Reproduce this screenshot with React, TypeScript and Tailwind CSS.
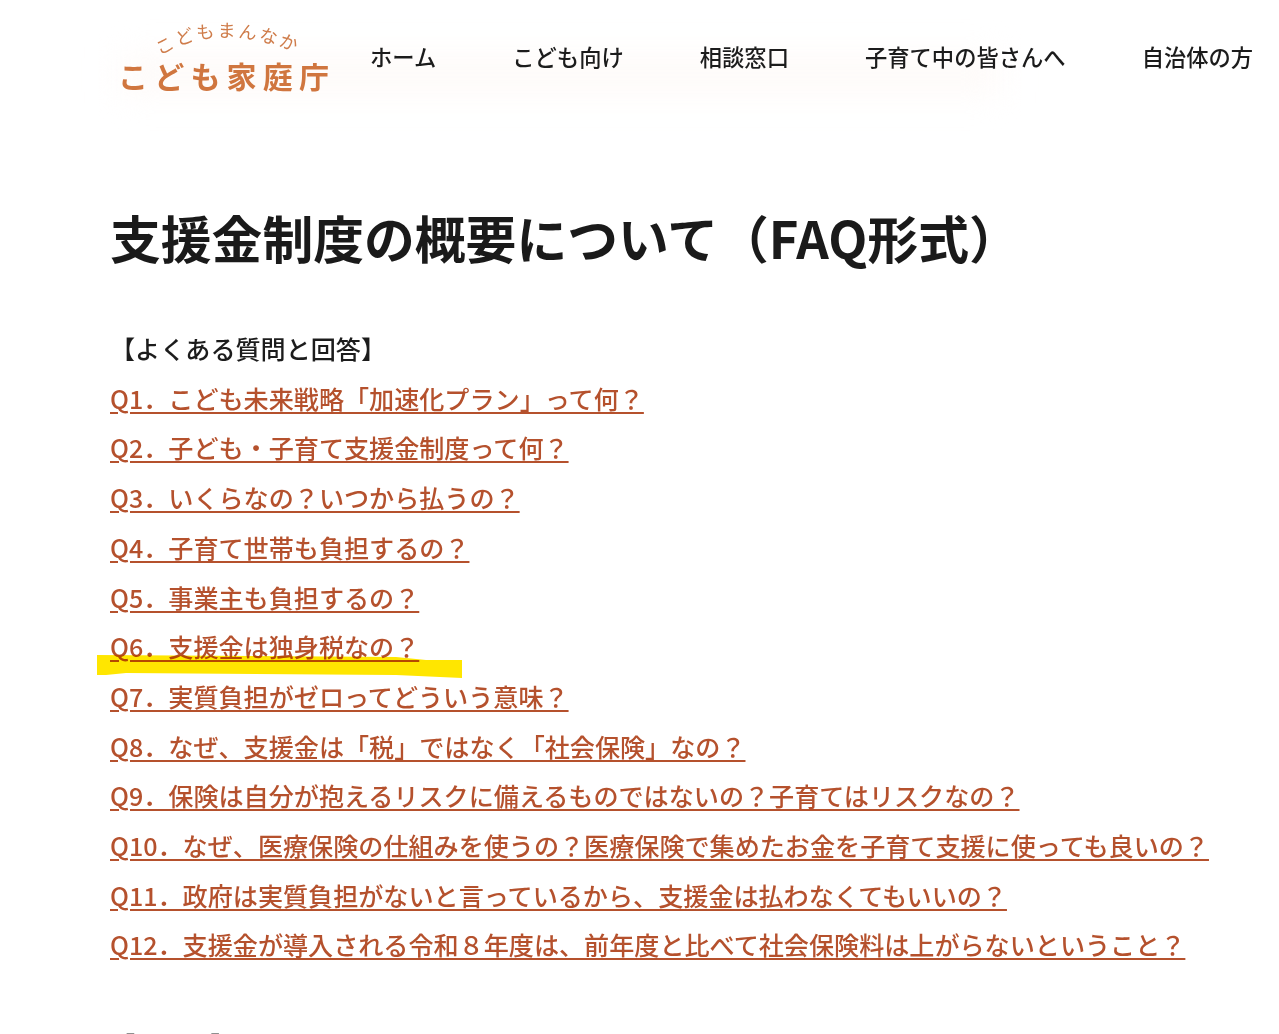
const faqs = [
  "Q1．こども未来戦略「加速化プラン」って何？",
  "Q2．子ども・子育て支援金制度って何？",
  "Q3．いくらなの？いつから払うの？",
  "Q4．子育て世帯も負担するの？",
  "Q5．事業主も負担するの？",
  "Q6．支援金は独身税なの？",
  "Q7．実質負担がゼロってどういう意味？",
  "Q8．なぜ、支援金は「税」ではなく「社会保険」なの？",
  "Q9．保険は自分が抱えるリスクに備えるものではないの？子育てはリスクなの？",
  "Q10．なぜ、医療保険の仕組みを使うの？医療保険で集めたお金を子育て支援に使っても良いの？",
  "Q11．政府は実質負担がないと言っているから、支援金は払わなくてもいいの？",
  "Q12．支援金が導入される令和８年度は、前年度と比べて社会保険料は上がらないということ？",
];

const navItems = ["ホーム", "こども向け", "相談窓口", "子育て中の皆さんへ", "自治体の方"];

function Logo() {
  return (
    <svg width="218" height="80" viewBox="0 0 218 80" className="shrink-0 overflow-visible">
      <defs>
        <path id="logo-arc" d="M40 36 Q 100 -2 184 36" fill="none" />
      </defs>
      <text fill="#cf7c4a" fontSize="18" letterSpacing="2.4">
        <textPath href="#logo-arc">こどもまんなか</textPath>
      </text>
      <text x="-2" y="68" fill="#d0763f" fontSize="30" fontWeight="700" letterSpacing="6.2">
        こども家庭庁
      </text>
    </svg>
  );
}

export default function App() {
  return (
    <div className="relative isolate h-[1034px] w-[1279px] overflow-hidden bg-white font-['Noto_Sans_CJK_JP','Noto_Sans',sans-serif] text-[#1c1c1c]">
      {/* faint haze behind the header image */}
      <div className="absolute left-[120px] top-[58px] -z-10 h-[34px] w-[880px] bg-[#fefaf8] blur-lg" />

      <header className="flex items-center pl-[120px] pt-[20px]">
        <Logo />
        <nav className="ml-[32px] flex shrink-0 gap-[76px] whitespace-nowrap pb-[8px] text-[22.3px] font-medium leading-[32px]">
          {navItems.map((item) => (
            <a key={item}>{item}</a>
          ))}
        </nav>
      </header>

      <main className="pl-[110px]">
        <h1 className="mt-[102px] whitespace-nowrap text-[50.8px] font-bold leading-[70px] text-[#1a1a1a]">
          支援金制度の概要について（FAQ形式）
        </h1>

        <p className="mt-[52px] whitespace-nowrap text-[25.1px] font-medium leading-[49.7px]">【よくある質問と回答】</p>

        <ul className="text-[25.1px] font-medium leading-[49.7px] text-[#b5512d]">
          {faqs.map((q, i) => (
            <li key={q} className="relative whitespace-nowrap">
              <a className="underline decoration-2 underline-offset-[3px]">{q}</a>
              {i === 5 && (
                <svg
                  width="370"
                  height="26"
                  viewBox="0 0 370 26"
                  className="absolute left-[-14px] top-[32px] mix-blend-multiply"
                >
                  <path d="M1 1 L 300 3 L 310 4 L 330 6 L 366 6 L 366 24 L 300 21 L 30 19 L 10 21 L 1 21 Z" fill="#ffe600" />
                </svg>
              )}
            </li>
          ))}
        </ul>

        <p className="mt-[49.7px] whitespace-nowrap text-[25.1px] font-medium leading-[49.7px]">【　　　】</p>
      </main>
    </div>
  );
}
